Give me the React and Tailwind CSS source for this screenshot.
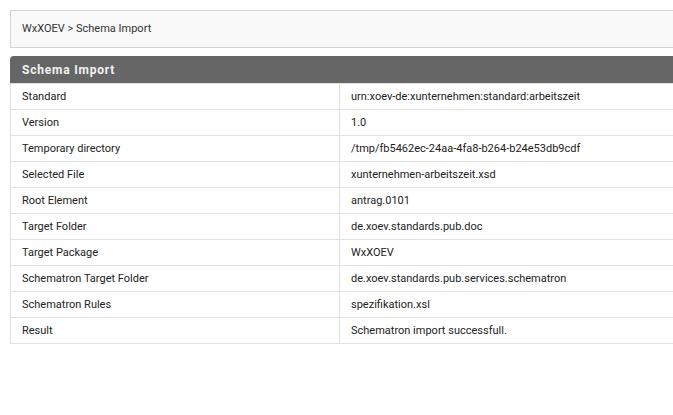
const rows = [
  ["Standard", "urn:xoev-de:xunternehmen:standard:arbeitszeit"],
  ["Version", "1.0"],
  ["Temporary directory", "/tmp/fb5462ec-24aa-4fa8-b264-b24e53db9cdf"],
  ["Selected File", "xunternehmen-arbeitszeit.xsd"],
  ["Root Element", "antrag.0101"],
  ["Target Folder", "de.xoev.standards.pub.doc"],
  ["Target Package", "WxXOEV"],
  ["Schematron Target Folder", "de.xoev.standards.pub.services.schematron"],
  ["Schematron Rules", "spezifikation.xsl"],
  ["Result", "Schematron import successfull."],
];

export default function App() {
  return (
    <div className="h-[415px] w-[673px] overflow-hidden bg-white font-['Roboto',sans-serif] text-[11px] text-[#222]">
      <div className="ml-[10px] w-[700px] pt-[10px]">
        <div className="flex h-[38px] items-center border border-[#d4d4d4] bg-[#f9f9f9] px-[11px] pt-px text-[11px] text-[#333]">
          WxXOEV &gt; Schema Import
        </div>

        <div className="mt-[8px] flex h-[27px] items-center rounded-tl-[4px] bg-[#666666] px-[12px] text-[12px] font-bold tracking-[0.8px] text-[#f2f2f2]">
          Schema Import
        </div>

        <table className="w-full border-collapse">
          <tbody>
            {rows.map(([label, value]) => (
              <tr key={label} className="h-[26px]">
                <td className="w-[329px] border border-[#e0e0e0] px-[11px] pt-[2px] align-middle">
                  {label}
                </td>
                <td className="border border-[#e0e0e0] px-[11px] pt-[2px] align-middle">
                  {value}
                </td>
              </tr>
            ))}
          </tbody>
        </table>
      </div>
    </div>
  );
}
